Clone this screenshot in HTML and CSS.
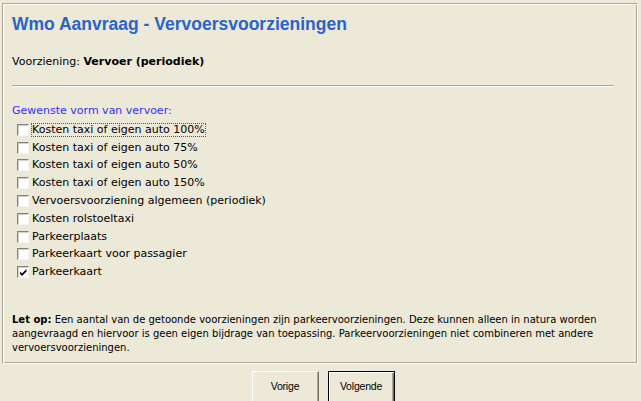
FILE: index.html
```html
<!DOCTYPE html>
<html>
<head>
<meta charset="utf-8">
<link rel="stylesheet" href="styles.css">
</head>
<body>
<div class="frame">
  <h1 class="title">Wmo Aanvraag - Vervoersvoorzieningen</h1>
  <p class="line">Voorziening: <b>Vervoer (periodiek)</b></p>
  <div class="rule"></div>
  <p class="legend">Gewenste vorm van vervoer:</p>
  <ul class="opts">
    <li><span class="box"></span><span class="lbl focus">Kosten taxi of eigen auto 100%</span></li>
    <li><span class="box"></span><span class="lbl">Kosten taxi of eigen auto 75%</span></li>
    <li><span class="box"></span><span class="lbl">Kosten taxi of eigen auto 50%</span></li>
    <li><span class="box"></span><span class="lbl">Kosten taxi of eigen auto 150%</span></li>
    <li><span class="box"></span><span class="lbl">Vervoersvoorziening algemeen (periodiek)</span></li>
    <li><span class="box"></span><span class="lbl">Kosten rolstoeltaxi</span></li>
    <li><span class="box"></span><span class="lbl">Parkeerplaats</span></li>
    <li><span class="box"></span><span class="lbl">Parkeerkaart voor passagier</span></li>
    <li><span class="box"><svg width="9" height="9" viewBox="0 0 9 9"><path d="M1 3.5 L3 5.5 L7.5 1 L7.5 3.5 L3 8 L1 6 Z" fill="#000"/></svg></span><span class="lbl">Parkeerkaart</span></li>
  </ul>
  <p class="note"><b>Let op:</b> Een aantal van de getoonde voorzieningen zijn parkeervoorzieningen. Deze kunnen alleen in natura worden aangevraagd en hiervoor is geen eigen bijdrage van toepassing. Parkeervoorzieningen niet combineren met andere vervoersvoorzieningen.</p>
</div>
<div class="buttons">
  <button class="btn">Vorige</button>
  <button class="btn default">Volgende</button>
</div>
</body>
</html>
```
FILE: styles.css
```css
html, body {
  margin: 0;
  padding: 0;
  background: #ece9d8;
  overflow: hidden;
}
body {
  font-family: "DejaVu Sans", Verdana, sans-serif;
  font-size: 11px;
  color: #000;
  width: 641px;
  height: 401px;
}
.frame {
  margin: 3px 3px 0 2px;
  height: 359px;
  border-top: 1px solid #aca899;
  border-left: 1px solid #aca899;
  border-right: 1px solid #fff;
  border-bottom: 1px solid #fff;
  box-shadow: inset 1px 1px 0 #fff, inset -1px -1px 0 #aca899;
  padding: 0 0 0 9px;
  display: flex;
  flex-direction: column;
}
.title {
  margin: 10px 0 0 0;
  font-family: "Liberation Sans", Arial, sans-serif;
  font-size: 17.5px;
  font-weight: bold;
  color: #2b64c8;
  line-height: 20px;
}
.line {
  margin: 21px 0 0 0;
  line-height: 13px;
}
.rule {
  margin: 17px 0 0 0;
  width: 602px;
  height: 1px;
  background: #aca899;
  border-bottom: 1px solid #fff;
}
.legend {
  margin: 17px 0 0 0;
  color: #3232ff;
  line-height: 13px;
}
.opts {
  list-style: none;
  margin: 4px 0 0 4px;
  padding: 0;
  display: flex;
  flex-direction: column;
}
.opts li {
  display: flex;
  align-items: center;
  height: 17.8px;
}
.box {
  width: 10px;
  height: 10px;
  background: #fff;
  border-top: 1px solid #808080;
  border-left: 1px solid #808080;
  border-right: 1px solid #f4f4f0;
  border-bottom: 1px solid #f4f4f0;
  box-shadow: inset 1px 1px 0 #d4d0c8;
  margin: 0 2px 0 1px;
  display: flex;
  align-items: center;
  justify-content: center;
}
.lbl {
  padding: 0;
  border: 1px dotted transparent;
  line-height: 12px;
}
.lbl.focus {
  border-color: #555;
}
.note {
  margin: auto 0 0 0;
  padding-bottom: 8px;
  font-size: 10px;
  line-height: 14px;
  width: 610px;
}
.buttons {
  display: flex;
  justify-content: center;
  gap: 9px;
  margin-top: 7px;
  padding-left: 5px;
}
.btn {
  width: 67px;
  height: 34px;
  background: #ece9d8;
  font-family: "Liberation Sans", Arial, sans-serif;
  font-size: 10.5px;
  letter-spacing: -0.2px;
  color: #000;
  border-top: 1px solid #fff;
  border-left: 1px solid #fff;
  border-right: 1px solid #716f64;
  border-bottom: 1px solid #716f64;
  box-shadow: inset -1px -1px 0 #aca899;
  padding: 0 0 4px 0;
}
.btn.default {
  border: 1px solid #000;
  box-shadow: inset 1px 1px 0 #fff, inset -1px -1px 0 #716f64, inset -2px -2px 0 #aca899;
}
```
